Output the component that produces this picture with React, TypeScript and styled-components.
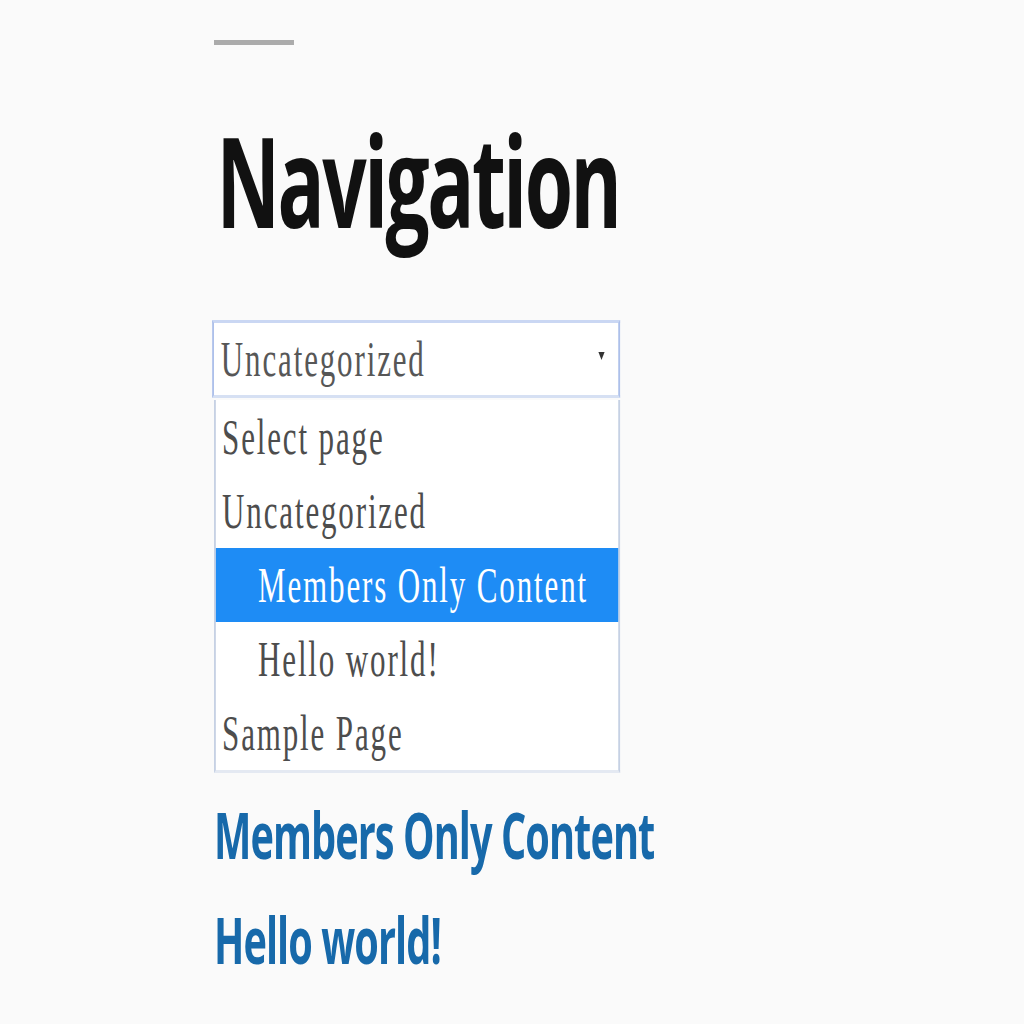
import React from "react";
import styled, { createGlobalStyle } from "styled-components";

const Global = createGlobalStyle`
  html, body { margin: 0; padding: 0; background: #fafafa; }
  body { width: 1024px; height: 1024px; overflow: hidden; }
`;

const Page = styled.div`
  width: 1024px;
  height: 1024px;
  background: #fafafa;
  overflow: hidden;
`;

const Column = styled.div`
  margin-left: 214px;
  width: 680px;
  display: flex;
  flex-direction: column;
  align-items: flex-start;
  transform: scaleX(0.62);
  transform-origin: 0 0;
`;

const Rule = styled.div`
  margin-top: 40px;
  width: 129px;
  height: 5px;
  background: #ababab;
`;

const Heading = styled.h2`
  margin: 71px 0 0 4px;
  font-family: "Open Sans", "Liberation Sans", sans-serif;
  font-weight: 700;
  font-size: 126px;
  line-height: 126px;
  height: 126px;
  color: #111111;
  letter-spacing: -4px;
`;

const Widget = styled.div`
  margin-top: 78px;
  margin-left: -3px;
  width: 658px;
  display: flex;
  flex-direction: column;
`;

const SelectBox = styled.div`
  box-sizing: border-box;
  height: 78px;
  background: #ffffff;
  border: 3px solid #adc0ea;
  border-top-color: #cad7f3;
  border-bottom-color: #d6e0f3;
  display: flex;
  align-items: center;
  justify-content: space-between;
  padding: 0 22px 0 11px;
  font-family: "Liberation Serif", serif;
  font-size: 50px;
  letter-spacing: 3px;
  color: #575757;
`;

const Arrow = styled.span`
  width: 0;
  height: 0;
  border-left: 5px solid transparent;
  border-right: 5px solid transparent;
  border-top: 8px solid #333;
  margin-bottom: 6px;
`;

const OptionList = styled.div`
  box-sizing: border-box;
  margin: 2px 0 0 3px;
  width: 655px;
  background: #ffffff;
  border: 3px solid #c6d1e4;
  border-top: none;
  border-bottom-color: #e4e9f2;
  display: flex;
  flex-direction: column;
`;

const Option = styled.div<{ $indent?: boolean; $selected?: boolean }>`
  height: 74px;
  line-height: 74px;
  padding-left: ${(p) => (p.$indent ? 68 : 10)}px;
  font-family: "Liberation Serif", serif;
  font-size: 50px;
  letter-spacing: 3px;
  white-space: nowrap;
  color: ${(p) => (p.$selected ? "#ffffff" : "#4d4d4d")};
  background: ${(p) => (p.$selected ? "#1e8cf5" : "transparent")};
`;

const LinkList = styled.div`
  margin-top: 30px;
  display: flex;
  flex-direction: column;
  gap: 41px;
`;

const PostLink = styled.a`
  display: block;
  font-family: "Open Sans", "Liberation Sans", sans-serif;
  font-weight: 700;
  font-size: 64px;
  line-height: 64px;
  height: 64px;
  color: #1769aa;
  letter-spacing: -1.5px;
  text-decoration: none;
  white-space: nowrap;
`;

const options = [
  { label: "Select page" },
  { label: "Uncategorized" },
  { label: "Members Only Content", indent: true, selected: true },
  { label: "Hello world!", indent: true },
  { label: "Sample Page" },
];

export default function App() {
  return (
    <Page>
      <Global />
      <Column>
        <Rule />
        <Heading>Navigation</Heading>
        <Widget>
          <SelectBox>
            <span>Uncategorized</span>
            <Arrow />
          </SelectBox>
          <OptionList>
            {options.map((o) => (
              <Option key={o.label} $indent={o.indent} $selected={o.selected}>
                {o.label}
              </Option>
            ))}
          </OptionList>
        </Widget>
        <LinkList>
          <PostLink href="#">Members Only Content</PostLink>
          <PostLink href="#">Hello world!</PostLink>
        </LinkList>
      </Column>
    </Page>
  );
}
